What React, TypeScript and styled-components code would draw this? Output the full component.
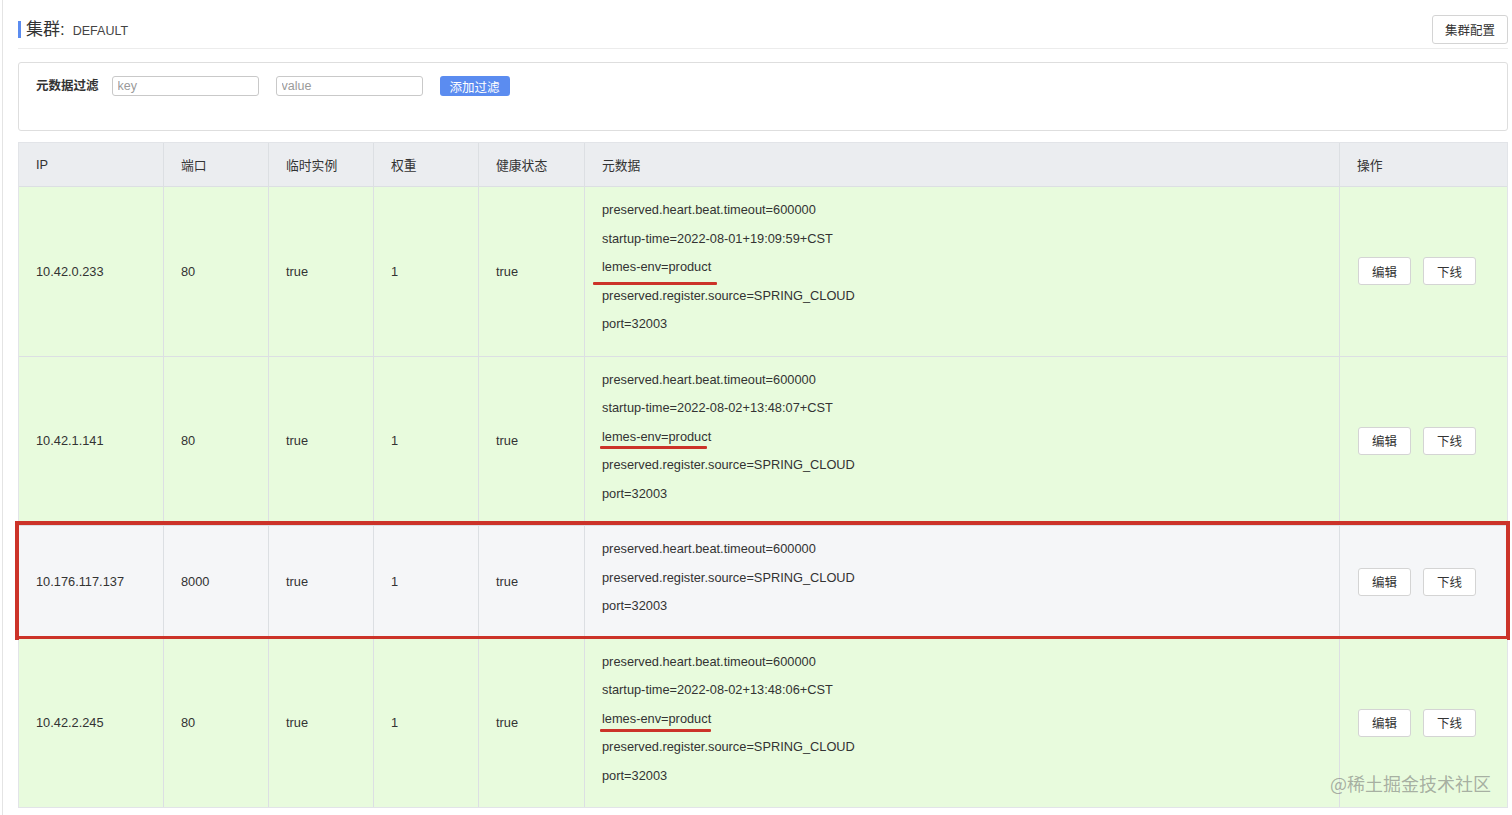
import React from 'react';
import styled, { createGlobalStyle } from 'styled-components';

const GlobalStyle = createGlobalStyle`
  html, body {
    margin: 0;
    padding: 0;
    background: #fff;
    font-family: "Liberation Sans", Arial, "Noto Sans CJK SC", sans-serif;
    color: #333;
  }
`;

const Shell = styled.div`
  position: relative;
  margin-left: 2px;
  border-left: 1px solid #e4e4e4;
  padding: 15px 4px 9px 15px;
  min-height: 791px;
`;

const Header = styled.div`
  display: flex;
  justify-content: space-between;
  align-items: center;
  padding-bottom: 4px;
  border-bottom: 1px solid #ececec;
`;

const Title = styled.div`
  display: flex;
  align-items: baseline;
  gap: 8px;
  border-left: 3px solid #5b8cf0;
  padding-left: 5px;
  height: 17px;
  line-height: 17px;
`;

const TitleLabel = styled.span`
  font-size: 17px;
  color: #333;
`;

const TitleValue = styled.span`
  font-size: 12.5px;
  color: #444;
`;

const PlainButton = styled.button`
  font-family: inherit;
  font-size: 12.5px;
  color: #333;
  background: #fff;
  border: 1px solid #d4d4d4;
  border-radius: 3px;
  height: ${p => p.$h || 28}px;
  padding: 0 ${p => p.$px || 13}px;
  cursor: pointer;
`;

const FilterBox = styled.div`
  margin-top: 13px;
  height: 69px;
  box-sizing: border-box;
  border: 1px solid #dedede;
  border-radius: 3px;
  padding: 13px 17px;
  display: flex;
  align-items: flex-start;
  gap: 13px;
`;

const FilterLabel = styled.label`
  font-size: 12.5px;
  font-weight: 600;
  color: #333;
  line-height: 20px;
`;

const FilterInput = styled.input`
  width: 147px;
  height: 20px;
  box-sizing: border-box;
  border: 1px solid #c9c9c9;
  border-radius: 3px;
  padding: 0 5px;
  font-family: inherit;
  font-size: 12.5px;
  margin-right: 4px;
  &::placeholder {
    color: #9a9a9a;
  }
`;

const PrimaryButton = styled.button`
  height: 20px;
  padding: 0 10px;
  border: none;
  border-radius: 3px;
  background: #5b8cf0;
  color: #fff;
  font-family: inherit;
  font-size: 12.5px;
`;

const Table = styled.div`
  margin-top: 11px;
  border: 1px solid #e2e4e8;
`;

const Row = styled.div`
  position: relative;
  display: grid;
  grid-template-columns: 145px 105px 105px 105px 106px 1fr 167px;
  background: ${p => (p.$head ? '#ebedf0' : p.$healthy ? '#e8fbdd' : '#f5f6f8')};
  border-bottom: 1px solid #dcdfe3;
  min-height: ${p => (p.$head ? 43 : 0)}px;
  &:last-child {
    border-bottom: none;
  }
  ${p =>
    p.$marked &&
    `
    &::after {
      content: '';
      position: absolute;
      left: -4px;
      right: -3px;
      top: -5px;
      bottom: -2px;
      border: 4px solid #cc3329;
      pointer-events: none;
    }
  `}
`;

const Cell = styled.div`
  display: flex;
  align-items: center;
  padding: 0 17px;
  font-size: 12.8px;
  color: #333;
  border-right: 1px solid #dcdfe3;
  &:last-child {
    border-right: none;
    gap: 12px;
  }
`;

const MetaCell = styled(Cell)`
  flex-direction: column;
  align-items: flex-start;
  padding: 9px 17px 17px;
`;

const MetaLine = styled.div`
  line-height: 28.5px;
  white-space: nowrap;
`;

const ActionCell = styled(Cell)`
  padding-left: 18px;
`;

const Mark = styled.span`
  position: relative;
  &::after {
    content: '';
    position: absolute;
    left: ${p => p.$l}px;
    right: ${p => p.$r}px;
    top: ${p => p.$t}px;
    height: 3px;
    background: #cc3329;
    border-radius: 1px;
  }
`;

const Watermark = styled.div`
  position: absolute;
  left: 1327px;
  top: 770px;
  font-size: 18px;
  color: rgba(110, 110, 110, 0.55);
  font-family: "Noto Sans CJK SC", sans-serif;
  pointer-events: none;
`;

type Instance = {
  ip: string;
  port: string;
  healthy: boolean;
  marked?: boolean;
  meta: string[];
  mark?: { l: number; r: number; t: number };
};

const instances: Instance[] = [
  {
    ip: '10.42.0.233',
    port: '80',
    healthy: true,
    meta: [
      'preserved.heart.beat.timeout=600000',
      'startup-time=2022-08-01+19:09:59+CST',
      'lemes-env=product',
      'preserved.register.source=SPRING_CLOUD',
      'port=32003',
    ],
    mark: { l: -9, r: -6, t: 23 },
  },
  {
    ip: '10.42.1.141',
    port: '80',
    healthy: true,
    meta: [
      'preserved.heart.beat.timeout=600000',
      'startup-time=2022-08-02+13:48:07+CST',
      'lemes-env=product',
      'preserved.register.source=SPRING_CLOUD',
      'port=32003',
    ],
    mark: { l: -2, r: 4, t: 17 },
  },
  {
    ip: '10.176.117.137',
    port: '8000',
    healthy: false,
    marked: true,
    meta: [
      'preserved.heart.beat.timeout=600000',
      'preserved.register.source=SPRING_CLOUD',
      'port=32003',
    ],
  },
  {
    ip: '10.42.2.245',
    port: '80',
    healthy: true,
    meta: [
      'preserved.heart.beat.timeout=600000',
      'startup-time=2022-08-02+13:48:06+CST',
      'lemes-env=product',
      'preserved.register.source=SPRING_CLOUD',
      'port=32003',
    ],
    mark: { l: -2, r: 0, t: 18 },
  },
];

const columns = ['IP', '端口', '临时实例', '权重', '健康状态', '元数据', '操作'];

export default function App() {
  return (
    <>
      <GlobalStyle />
      <Shell>
        <Header>
          <Title>
            <TitleLabel>集群:</TitleLabel>
            <TitleValue>DEFAULT</TitleValue>
          </Title>
          <PlainButton $h={29} $px={12}>集群配置</PlainButton>
        </Header>

        <FilterBox>
          <FilterLabel>元数据过滤</FilterLabel>
          <FilterInput placeholder="key" />
          <FilterInput placeholder="value" />
          <PrimaryButton>添加过滤</PrimaryButton>
        </FilterBox>

        <Table>
          <Row $head>
            {columns.map(c => (
              <Cell key={c}>{c}</Cell>
            ))}
          </Row>
          {instances.map(inst => (
            <Row key={inst.ip} $healthy={inst.healthy} $marked={inst.marked}>
              <Cell>{inst.ip}</Cell>
              <Cell>{inst.port}</Cell>
              <Cell>true</Cell>
              <Cell>1</Cell>
              <Cell>true</Cell>
              <MetaCell>
                {inst.meta.map(line => (
                  <MetaLine key={line}>
                    {inst.mark && line.startsWith('lemes-env') ? (
                      <Mark $l={inst.mark.l} $r={inst.mark.r} $t={inst.mark.t}>
                        {line}
                      </Mark>
                    ) : (
                      line
                    )}
                  </MetaLine>
                ))}
              </MetaCell>
              <ActionCell>
                <PlainButton $px={13}>编辑</PlainButton>
                <PlainButton $px={13}>下线</PlainButton>
              </ActionCell>
            </Row>
          ))}
        </Table>
        <Watermark>@稀土掘金技术社区</Watermark>
      </Shell>
    </>
  );
}
